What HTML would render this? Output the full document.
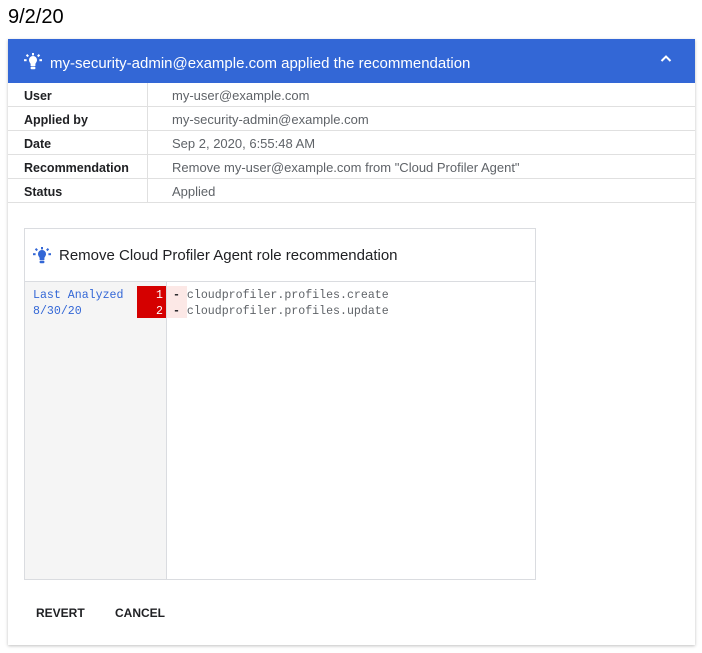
<!DOCTYPE html>
<html><head><style>
*{box-sizing:border-box;margin:0;padding:0}
body{width:702px;height:653px;background:#fff;font-family:"Liberation Sans",Roboto,sans-serif;position:relative;overflow:hidden;color:#202124}
.a{position:absolute}
.date{left:8px;top:6px;font-size:20px;color:#000}
.card{left:8px;top:39px;width:687px;height:606px;background:#fff;box-shadow:0 1px 3px rgba(0,0,0,.25)}
.hdr{left:0;top:0;width:687px;height:44px;background:#3367d6;color:#fff;font-size:15px}
.row{left:0;width:687px;height:24px;border-bottom:1px solid #e0e0e0;font-size:13px}
.row .k{position:absolute;left:16px;top:6px;color:#202124;font-weight:bold;font-size:12.5px}
.row .v{position:absolute;left:164px;top:5px;color:#5f6368}
.row .d{position:absolute;left:139px;top:0;height:24px;border-left:1px solid #e0e0e0}
.box{left:16px;top:189px;width:512px;height:352px;border:1px solid #dadce0}
.mono{font-family:"Liberation Mono",monospace;font-size:11.6px;line-height:16px}
.btn{font-size:12px;font-weight:bold;color:#202124;top:567px}
</style></head><body>
<div class="a date">9/2/20</div>
<div class="a card">
 <div class="a hdr">
  <svg class="a" style="left:15px;top:13px" width="20" height="20" viewBox="0 0 20 20"><g fill="#fff"><path d="M6 8a4 4 0 0 1 8 0c0 2-1.3 2.7-1.6 4V14H7.6V12C7.3 10.7 6 10 6 8z"/><rect x="7.6" y="14.6" width="4.8" height="2.6" rx="1"/><rect x="9" y="1" width="2" height="2.4"/><rect x="1" y="7.2" width="2.6" height="2"/><rect x="16.4" y="7.2" width="2.6" height="2"/><rect x="3.4" y="2.4" width="2" height="2.4" transform="rotate(-45 4.4 3.6)"/><rect x="14.6" y="2.4" width="2" height="2.4" transform="rotate(45 15.6 3.6)"/></g></svg>
  <div class="a" style="left:42px;top:16px">my-security-admin@example.com applied the recommendation</div>
  <svg class="a" style="left:652px;top:15px" width="12" height="10" viewBox="0 0 12 10"><path d="M1.5 7L6 2.5 10.5 7" stroke="#fff" stroke-width="2" fill="none"/></svg>
 </div>
 <div class="a row" style="top:44px"><span class="k">User</span><span class="d"></span><span class="v">my-user@example.com</span></div>
 <div class="a row" style="top:68px"><span class="k">Applied by</span><span class="d"></span><span class="v">my-security-admin@example.com</span></div>
 <div class="a row" style="top:92px"><span class="k">Date</span><span class="d"></span><span class="v">Sep 2, 2020, 6:55:48 AM</span></div>
 <div class="a row" style="top:116px"><span class="k">Recommendation</span><span class="d"></span><span class="v">Remove my-user@example.com from "Cloud Profiler Agent"</span></div>
 <div class="a row" style="top:140px"><span class="k">Status</span><span class="d"></span><span class="v">Applied</span></div>
 <div class="a box">
  <svg class="a" style="left:7px;top:17px" width="20" height="20" viewBox="0 0 20 20"><g fill="#3367d6"><path d="M6 8a4 4 0 0 1 8 0c0 2-1.3 2.7-1.6 4V14H7.6V12C7.3 10.7 6 10 6 8z"/><rect x="7.6" y="14.6" width="4.8" height="2.6" rx="1"/><rect x="9" y="1" width="2" height="2.4"/><rect x="1" y="7.2" width="2.6" height="2"/><rect x="16.4" y="7.2" width="2.6" height="2"/><rect x="3.4" y="2.4" width="2" height="2.4" transform="rotate(-45 4.4 3.6)"/><rect x="14.6" y="2.4" width="2" height="2.4" transform="rotate(45 15.6 3.6)"/></g></svg>
  <div class="a" style="left:34px;top:18px;font-size:15px;color:#202124">Remove Cloud Profiler Agent role recommendation</div>
  <div class="a" style="left:0;top:52px;width:510px;border-top:1px solid #dadce0"></div>
  <div class="a" style="left:0;top:53px;width:142px;height:297px;background:#f5f5f5;border-right:1px solid #dadce0"></div>
  <div class="a mono" style="left:8px;top:59px;color:#3367d6">Last Analyzed<br>8/30/20</div>
  <div class="a mono" style="left:112px;top:57px;width:29px;height:32px;background:#d50000;color:#fff;text-align:right;padding-right:3px;padding-top:2px">1<br>2</div>
  <div class="a" style="left:142px;top:57px;width:20px;height:32px;background:#fce8e6"></div>
  <div class="a mono" style="left:148px;top:59px;color:#5f6368"><b style="color:#202124">-</b>&nbsp;cloudprofiler.profiles.create<br><b style="color:#202124">-</b>&nbsp;cloudprofiler.profiles.update</div>
 </div>
 <div class="a btn" style="left:28px">REVERT</div>
 <div class="a btn" style="left:107px">CANCEL</div>
</div>
</body></html>
